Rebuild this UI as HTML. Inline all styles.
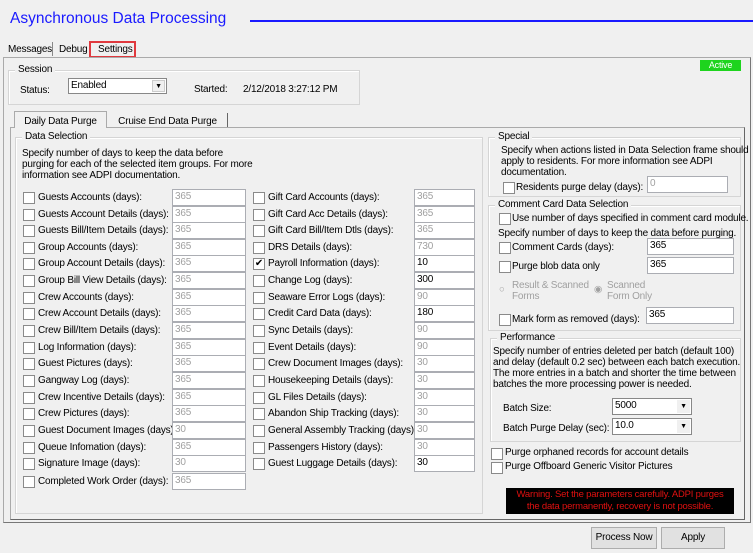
<!DOCTYPE html>
<html><head><meta charset="utf-8"><style>
*{box-sizing:border-box}
body{margin:0;width:753px;height:553px;background:#f0f0f0;font-family:"Liberation Sans",sans-serif;font-size:10px;letter-spacing:-0.2px;color:#000;position:relative;overflow:hidden}
.a{position:absolute;white-space:nowrap}
.g{position:absolute;border:1px solid #d5d5d5;box-shadow:inset 1px 1px 0 #fff}
.gl{position:absolute;background:#f0f0f0;padding:0 3px;top:-7px;left:6px}
.cb{position:absolute;width:12px;height:12px;border:1px solid #8a8a8a;background:#fff}
.tb{position:absolute;height:17px;border:1px solid #abadb3;background:#fff;padding:1px 2px;color:#a0a0a0}
.tb.e{color:#000}
.r{position:absolute;height:17px}
</style></head><body>
<div class="a" style="left:10px;top:10px;font-size:15.5px;letter-spacing:0;color:#1a1aff">Asynchronous Data Processing</div>
<div class="a" style="left:250px;top:20px;width:503px;height:2px;background:#1a1aff"></div>
<div class="a" style="left:8px;top:44px">Messages</div>
<div class="a" style="left:52px;top:42px;width:1px;height:14px;background:#888"></div>
<div class="a" style="left:59px;top:44px">Debug</div>
<div class="a" style="left:89px;top:41px;width:47px;height:17px;border:2px solid #e0393e"></div>
<div class="a" style="left:98px;top:44px">Settings</div>
<div class="a" style="left:3px;top:57px;width:748px;height:466px;border:1px solid #aaa;border-right-color:#777;border-bottom-color:#777"></div>
<div class="a" style="left:700px;top:60px;width:41px;height:11px;background:#1ed41e;color:#fff;font-size:9px;text-align:center;line-height:11px">Active</div>
<div class="g" style="left:8px;top:70px;width:352px;height:35px"><div class="gl">Session</div></div>
<div class="a" style="left:20px;top:85px">Status:</div>
<div class="a" style="left:68px;top:78px;width:99px;height:16px;border:1px solid #888;background:#fff;padding:1px 2px">Enabled<span style="position:absolute;right:1px;top:1px;width:13px;height:12px;background:#f0f0f0;border:1px solid #ccc;font-size:7px;text-align:center;line-height:11px">▼</span></div>
<div class="a" style="left:194px;top:84px">Started:</div>
<div class="a" style="left:243px;top:84px">2/12/2018 3:27:12 PM</div>
<div class="a" style="left:10px;top:127px;width:735px;height:393px;border:1px solid #aaa;border-right-color:#666;border-bottom-color:#666"></div>
<div class="a" style="left:14px;top:111px;width:93px;height:17px;border:1px solid #aaa;border-bottom:none;background:#f0f0f0;text-align:center;padding-top:4px">Daily Data Purge</div>
<div class="a" style="left:108px;top:113px;width:120px;height:14px;border-right:1px solid #666;text-align:center;padding-top:3px">Cruise End Data Purge</div>
<div class="g" style="left:15px;top:137px;width:468px;height:377px"><div class="gl">Data Selection</div></div>
<div class="a" style="left:22px;top:148px;line-height:11px">Specify number of days to keep the data before<br>purging for each of the selected item groups. For more<br>information see ADPI documentation.</div>

<div class="r" style="top:189px"><div class="cb" style="left:23px;top:3px"></div><div class="a" style="left:38px;top:3px">Guests Accounts (days):</div><div class="tb" style="left:172px;width:74px">365</div><div class="cb" style="left:253px;top:3px"></div><div class="a" style="left:268px;top:3px">Gift Card Accounts (days):</div><div class="tb" style="left:414px;width:61px">365</div></div>
<div class="r" style="top:206px"><div class="cb" style="left:23px;top:3px"></div><div class="a" style="left:38px;top:3px">Guests Account Details (days):</div><div class="tb" style="left:172px;width:74px">365</div><div class="cb" style="left:253px;top:3px"></div><div class="a" style="left:268px;top:3px">Gift Card Acc Details (days):</div><div class="tb" style="left:414px;width:61px">365</div></div>
<div class="r" style="top:222px"><div class="cb" style="left:23px;top:3px"></div><div class="a" style="left:38px;top:3px">Guests Bill/Item Details (days):</div><div class="tb" style="left:172px;width:74px">365</div><div class="cb" style="left:253px;top:3px"></div><div class="a" style="left:268px;top:3px">Gift Card Bill/Item Dtls (days):</div><div class="tb" style="left:414px;width:61px">365</div></div>
<div class="r" style="top:239px"><div class="cb" style="left:23px;top:3px"></div><div class="a" style="left:38px;top:3px">Group Accounts (days):</div><div class="tb" style="left:172px;width:74px">365</div><div class="cb" style="left:253px;top:3px"></div><div class="a" style="left:268px;top:3px">DRS Details (days):</div><div class="tb" style="left:414px;width:61px">730</div></div>
<div class="r" style="top:255px"><div class="cb" style="left:23px;top:3px"></div><div class="a" style="left:38px;top:3px">Group Account Details (days):</div><div class="tb" style="left:172px;width:74px">365</div><div class="cb" style="left:253px;top:3px;font-size:10px;line-height:10px;text-align:center">✔</div><div class="a" style="left:268px;top:3px">Payroll Information (days):</div><div class="tb e" style="left:414px;width:61px">10</div></div>
<div class="r" style="top:272px"><div class="cb" style="left:23px;top:3px"></div><div class="a" style="left:38px;top:3px">Group Bill View Details (days):</div><div class="tb" style="left:172px;width:74px">365</div><div class="cb" style="left:253px;top:3px"></div><div class="a" style="left:268px;top:3px">Change Log (days):</div><div class="tb e" style="left:414px;width:61px">300</div></div>
<div class="r" style="top:289px"><div class="cb" style="left:23px;top:3px"></div><div class="a" style="left:38px;top:3px">Crew Accounts (days):</div><div class="tb" style="left:172px;width:74px">365</div><div class="cb" style="left:253px;top:3px"></div><div class="a" style="left:268px;top:3px">Seaware Error Logs (days):</div><div class="tb" style="left:414px;width:61px">90</div></div>
<div class="r" style="top:305px"><div class="cb" style="left:23px;top:3px"></div><div class="a" style="left:38px;top:3px">Crew Account Details (days):</div><div class="tb" style="left:172px;width:74px">365</div><div class="cb" style="left:253px;top:3px"></div><div class="a" style="left:268px;top:3px">Credit Card Data (days):</div><div class="tb e" style="left:414px;width:61px">180</div></div>
<div class="r" style="top:322px"><div class="cb" style="left:23px;top:3px"></div><div class="a" style="left:38px;top:3px">Crew Bill/Item Details (days):</div><div class="tb" style="left:172px;width:74px">365</div><div class="cb" style="left:253px;top:3px"></div><div class="a" style="left:268px;top:3px">Sync Details (days):</div><div class="tb" style="left:414px;width:61px">90</div></div>
<div class="r" style="top:339px"><div class="cb" style="left:23px;top:3px"></div><div class="a" style="left:38px;top:3px">Log Information (days):</div><div class="tb" style="left:172px;width:74px">365</div><div class="cb" style="left:253px;top:3px"></div><div class="a" style="left:268px;top:3px">Event Details (days):</div><div class="tb" style="left:414px;width:61px">90</div></div>
<div class="r" style="top:355px"><div class="cb" style="left:23px;top:3px"></div><div class="a" style="left:38px;top:3px">Guest Pictures (days):</div><div class="tb" style="left:172px;width:74px">365</div><div class="cb" style="left:253px;top:3px"></div><div class="a" style="left:268px;top:3px">Crew Document Images (days):</div><div class="tb" style="left:414px;width:61px">30</div></div>
<div class="r" style="top:372px"><div class="cb" style="left:23px;top:3px"></div><div class="a" style="left:38px;top:3px">Gangway Log (days):</div><div class="tb" style="left:172px;width:74px">365</div><div class="cb" style="left:253px;top:3px"></div><div class="a" style="left:268px;top:3px">Housekeeping Details (days):</div><div class="tb" style="left:414px;width:61px">30</div></div>
<div class="r" style="top:389px"><div class="cb" style="left:23px;top:3px"></div><div class="a" style="left:38px;top:3px">Crew Incentive Details (days):</div><div class="tb" style="left:172px;width:74px">365</div><div class="cb" style="left:253px;top:3px"></div><div class="a" style="left:268px;top:3px">GL Files Details (days):</div><div class="tb" style="left:414px;width:61px">30</div></div>
<div class="r" style="top:405px"><div class="cb" style="left:23px;top:3px"></div><div class="a" style="left:38px;top:3px">Crew Pictures (days):</div><div class="tb" style="left:172px;width:74px">365</div><div class="cb" style="left:253px;top:3px"></div><div class="a" style="left:268px;top:3px">Abandon Ship Tracking (days):</div><div class="tb" style="left:414px;width:61px">30</div></div>
<div class="r" style="top:422px"><div class="cb" style="left:23px;top:3px"></div><div class="a" style="left:38px;top:3px">Guest Document Images (days):</div><div class="tb" style="left:172px;width:74px">30</div><div class="cb" style="left:253px;top:3px"></div><div class="a" style="left:268px;top:3px">General Assembly Tracking (days):</div><div class="tb" style="left:414px;width:61px">30</div></div>
<div class="r" style="top:439px"><div class="cb" style="left:23px;top:3px"></div><div class="a" style="left:38px;top:3px">Queue Infomation (days):</div><div class="tb" style="left:172px;width:74px">365</div><div class="cb" style="left:253px;top:3px"></div><div class="a" style="left:268px;top:3px">Passengers History (days):</div><div class="tb" style="left:414px;width:61px">30</div></div>
<div class="r" style="top:455px"><div class="cb" style="left:23px;top:3px"></div><div class="a" style="left:38px;top:3px">Signature Image (days):</div><div class="tb" style="left:172px;width:74px">30</div><div class="cb" style="left:253px;top:3px"></div><div class="a" style="left:268px;top:3px">Guest Luggage Details (days):</div><div class="tb e" style="left:414px;width:61px">30</div></div>
<div class="r" style="top:473px"><div class="cb" style="left:23px;top:3px"></div><div class="a" style="left:38px;top:3px">Completed Work Order (days):</div><div class="tb" style="left:172px;width:74px">365</div></div>

<div class="g" style="left:488px;top:137px;width:253px;height:60px"><div class="gl">Special</div></div>
<div class="a" style="left:501px;top:145px;line-height:11px">Specify when actions listed in Data Selection frame should<br>apply to residents. For more information see ADPI<br>documentation.</div>
<div class="cb" style="left:503px;top:182px"></div><div class="a" style="left:516px;top:182px">Residents purge delay (days):</div>
<div class="tb" style="left:647px;top:176px;width:81px">0</div>

<div class="g" style="left:488px;top:205px;width:253px;height:126px"><div class="gl">Comment Card Data Selection</div></div>
<div class="cb" style="left:499px;top:213px"></div><div class="a" style="left:512px;top:213px">Use number of days specified in comment card module.</div>
<div class="a" style="left:498px;top:228px">Specify number of days to keep the data before purging.</div>
<div class="cb" style="left:499px;top:242px"></div><div class="a" style="left:512px;top:242px">Comment Cards (days):</div><div class="tb e" style="left:647px;top:238px;width:87px">365</div>
<div class="cb" style="left:499px;top:261px"></div><div class="a" style="left:512px;top:261px">Purge blob data only</div><div class="tb e" style="left:647px;top:257px;width:87px">365</div>
<div class="a" style="left:499px;top:284px;color:#a0a0a0;font-size:9.5px">○</div><div class="a" style="left:512px;top:280px;color:#a0a0a0;line-height:11px">Result &amp; Scanned<br>Forms</div>
<div class="a" style="left:594px;top:284px;color:#a0a0a0;font-size:9.5px">◉</div><div class="a" style="left:607px;top:280px;color:#a0a0a0;line-height:11px">Scanned<br>Form Only</div>
<div class="cb" style="left:499px;top:314px"></div><div class="a" style="left:512px;top:314px">Mark form as removed (days):</div><div class="tb e" style="left:646px;top:307px;width:88px">365</div>

<div class="g" style="left:490px;top:338px;width:251px;height:104px"><div class="gl">Performance</div></div>
<div class="a" style="left:493px;top:346px;line-height:11px">Specify number of entries deleted per batch (default 100)<br>and delay (default 0.2 sec) between each batch execution.<br>The more entries in a batch and shorter the time between<br>batches the more processing power is needed.</div>
<div class="a" style="left:503px;top:403px">Batch Size:</div>
<div class="a" style="left:612px;top:398px;width:80px;height:17px;border:1px solid #888;background:#fff;padding:1px 2px">5000<span style="position:absolute;right:1px;top:1px;width:13px;height:13px;background:#f0f0f0;font-size:7px;text-align:center;line-height:13px">▼</span></div>
<div class="a" style="left:503px;top:423px">Batch Purge Delay (sec):</div>
<div class="a" style="left:612px;top:418px;width:80px;height:17px;border:1px solid #888;background:#fff;padding:1px 2px">10.0<span style="position:absolute;right:1px;top:1px;width:13px;height:13px;background:#f0f0f0;font-size:7px;text-align:center;line-height:13px">▼</span></div>
<div class="cb" style="left:491px;top:448px"></div><div class="a" style="left:505px;top:447px">Purge orphaned records for account details</div>
<div class="cb" style="left:491px;top:462px"></div><div class="a" style="left:505px;top:461px">Purge Offboard Generic Visitor Pictures</div>
<div class="a" style="left:506px;top:488px;width:228px;height:26px;background:#000;color:#e01010;text-align:center;line-height:12px;padding-top:1px;font-size:9.5px">Warning. Set the parameters carefully. ADPI purges<br>the data permanently, recovery is not possible.</div>

<div class="a" style="left:591px;top:527px;width:66px;height:22px;border:1px solid #adadad;background:#e1e1e1;text-align:center;line-height:20px">Process Now</div>
<div class="a" style="left:661px;top:527px;width:64px;height:22px;border:1px solid #adadad;background:#e1e1e1;text-align:center;line-height:20px">Apply</div>
</body></html>
